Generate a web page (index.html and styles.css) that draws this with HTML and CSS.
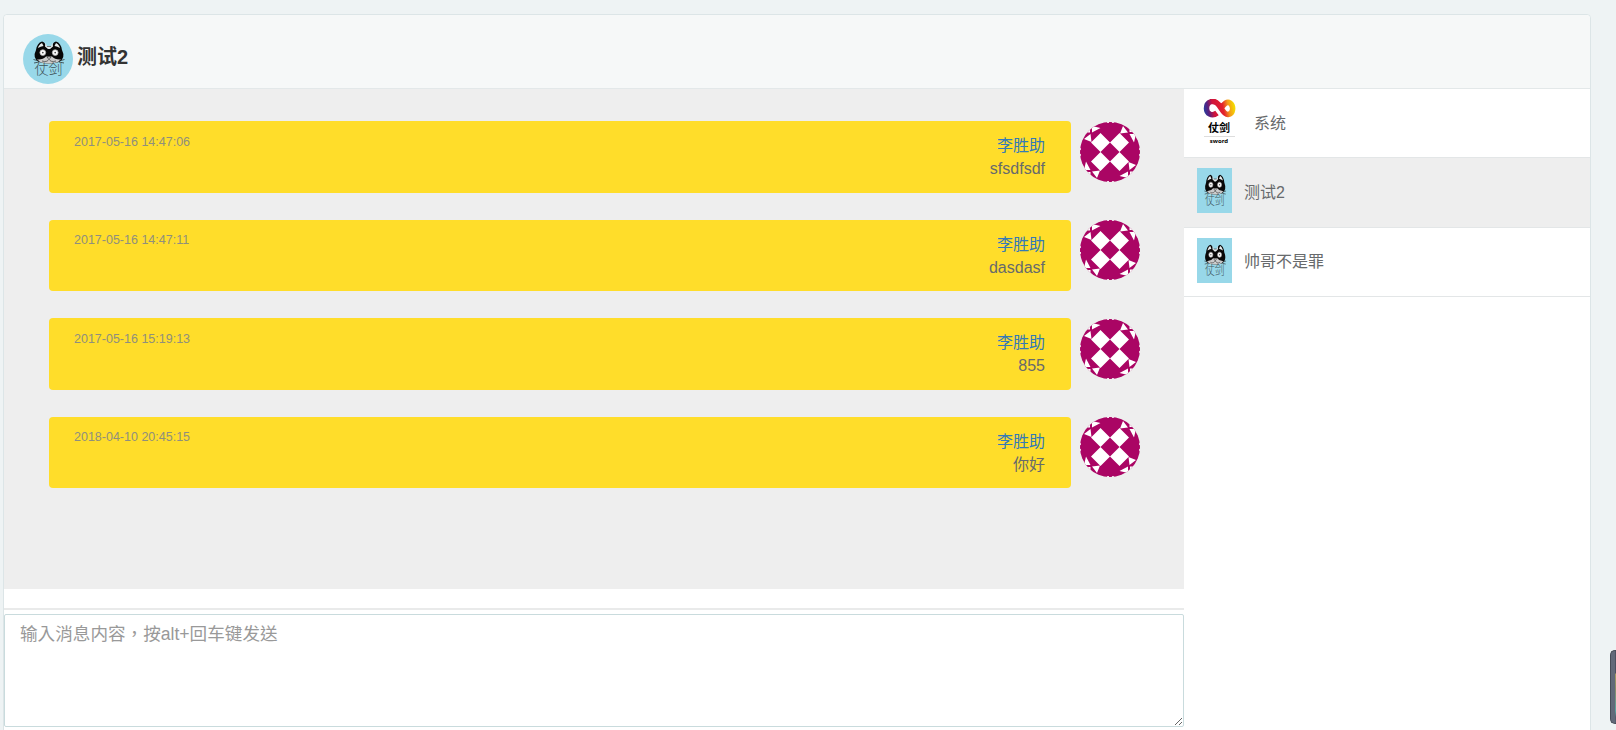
FILE: index.html
```html
<!DOCTYPE html>
<html lang="zh">
<head>
<meta charset="utf-8">
<title>测试2</title>
<link rel="stylesheet" href="styles.css">
</head>
<body>
<svg class="defs" aria-hidden="true">
  <defs>
    <symbol id="cat" viewBox="0 0 50 50" preserveAspectRatio="none">
      <rect width="50" height="50" fill="#98d8e9"/>
      <path d="M13 16Q14 9 19 7.500Q22 8 23 12H29Q30 8 33 7.500Q38 9 39 16Q43 24 36 28Q26 31 16 28Q9 24 13 16Z" fill="#080808"/>
      <path d="M15.500 12.500Q17 9.500 19 9L20.500 12Q17.500 12.500 15 14ZM36.500 12.500Q35 9.500 33 9L31.500 12Q34.500 12.500 37 14Z" fill="#e9eeee"/>
      <path d="M22.500 8.500L24 12.500H28L29.500 8.500L30 12.500L27 15H25L22 12.500Z" fill="#dfe8ea"/>
      <path d="M14 25.500Q20 26 23 22.500H29Q32 26 38 25.500Q35 29.500 26 29.500Q17 29.500 14 25.500Z" fill="#ccc"/>
      <g fill="#fff" stroke="#aaa" stroke-width=".8"><circle cx="19.8" cy="18.6" r="2.9"/><circle cx="32.2" cy="18.6" r="2.9"/></g>
      <g fill="#555"><circle cx="19.8" cy="18.6" r=".9"/><circle cx="32.2" cy="18.6" r=".9"/></g>
      <path d="M24 23H28L26 25.5ZM19 27Q24 28.5 26 25.5Q28 28.5 33 27" fill="#eee" stroke="#333" stroke-width=".7"/>
      <path d="M10.500 25.500L16 27M11 29L16 28M41.500 25.500L36 27M41 29L36 28" stroke="#222" stroke-width=".7"/>
      <text x="25.5" y="40" text-anchor="middle" class="cat-text">仗剑</text>
    </symbol>
    <symbol id="identicon" viewBox="0 0 60 60">
      <rect width="60" height="60" fill="#aa0564"/>
      <path d="M20.5 11L30 20.5L39.5 11L49 20.5L39.5 30L49 39.5L39.5 49L30 39.5L20.5 49L11 39.5L20.5 30L11 20.5Z" fill="#fff"/>
      <path d="M30 20.5L39.5 30L30 39.5L20.5 30Z" fill="#aa0564"/>
      <g id="corner" fill="#fff">
        <path d="M12 4L20.500 6L12 10.500ZM10.500 12L11.500 20L4 17ZM10 6V10.500H6Z"/>
      </g>
      <use href="#corner" transform="rotate(90 30 30)"/>
      <use href="#corner" transform="rotate(180 30 30)"/>
      <use href="#corner" transform="rotate(270 30 30)"/>
      <path d="M27 0H29V1H27ZM32 0H34V1H32ZM27 59H29V60H27ZM32 59H34V60H32ZM0 26H1V28H0ZM0 32H1V34H0ZM59 26H60V28H59ZM59 32H60V34H59Z" fill="#fff"/>
    </symbol>
    <linearGradient id="ribbon" gradientUnits="userSpaceOnUse" x1="4" y1="14" x2="35" y2="8">
      <stop offset="0" stop-color="#2443a0"/><stop offset=".15" stop-color="#572080"/><stop offset=".32" stop-color="#d0143c"/><stop offset=".62" stop-color="#e2202c"/><stop offset=".8" stop-color="#f59a18"/><stop offset="1" stop-color="#f3e000"/>
    </linearGradient>
  </defs>
</svg>

<main class="panel">
  <header class="panel-header">
    <svg class="room-avatar"><use href="#cat"/></svg>
    <h1 class="room-title">测试2</h1>
  </header>
  <div class="panel-body">
    <section class="chat">
      <div class="messages">
        <article class="message">
          <div class="bubble"><time>2017-05-16 14:47:06</time><div class="content"><a class="author">李胜助</a><p>sfsdfsdf</p></div></div>
          <svg class="avatar"><use href="#identicon"/></svg>
        </article>
        <article class="message">
          <div class="bubble"><time>2017-05-16 14:47:11</time><div class="content"><a class="author">李胜助</a><p>dasdasf</p></div></div>
          <svg class="avatar"><use href="#identicon"/></svg>
        </article>
        <article class="message">
          <div class="bubble"><time>2017-05-16 15:19:13</time><div class="content"><a class="author">李胜助</a><p>855</p></div></div>
          <svg class="avatar"><use href="#identicon"/></svg>
        </article>
        <article class="message">
          <div class="bubble"><time>2018-04-10 20:45:15</time><div class="content"><a class="author">李胜助</a><p>你好</p></div></div>
          <svg class="avatar"><use href="#identicon"/></svg>
        </article>
      </div>
      <div class="composer">
        <textarea class="composer-input" lang="zh-TW" placeholder="输入消息内容，按alt+回车键发送"></textarea>
      </div>
    </section>
    <aside class="contacts">
      <div class="contact">
        <svg class="logo" viewBox="0 0 45 45">
          <path d="M17 14C12 18 6.500 14.500 6.500 9.500C6.500 2 14 .5 18 5C22 9 23 15.500 28 15.500C33.500 15 34 7 30 4C27 2 24 5 22 8" fill="none" stroke="url(#ribbon)" stroke-width="5.500"/>
          <text x="19" y="33" text-anchor="middle" class="logo-name">仗剑</text>
          <path d="M4 37.500H35" stroke="#ddd"/>
          <text x="19" y="43.500" text-anchor="middle" class="logo-sub">sword</text>
        </svg>
        <span>系统</span>
      </div>
      <div class="contact active"><svg class="thumb" viewBox="0 0 35 45" preserveAspectRatio="none"><use href="#cat" width="35" height="45"/></svg><span>测试2</span></div>
      <div class="contact"><svg class="thumb" viewBox="0 0 35 45" preserveAspectRatio="none"><use href="#cat" width="35" height="45"/></svg><span>帅哥不是罪</span></div>
    </aside>
  </div>
</main>
<div class="side-widget"></div>
</body>
</html>
```

FILE: styles.css
```css
* { box-sizing: border-box; }
body {
  margin: 0;
  height: 730px;
  overflow: hidden;
  padding: 14px 25px 0 3px;
  background: #eef3f4;
  color: #676a6c;
  font: 16px/23px "Liberation Sans", "Noto Sans CJK SC", sans-serif;
}
.defs { position: absolute; width: 0; height: 0; }
.panel {
  height: 740px;
  border: 1px solid #dce5e7;
  border-radius: 4px;
  background: #fff;
}
.panel-header {
  display: flex;
  height: 74px;
  padding: 19px 19px 0;
  background: #f6f8f8;
  border-bottom: 1px solid #e3e8e9;
  border-radius: 4px 4px 0 0;
}
.room-avatar { width: 50px; height: 50px; border-radius: 50%; }
.room-title { margin: 9px 0 0 4px; color: #333; font-size: 20px; line-height: 28px; font-weight: bold; }
.panel-body { display: flex; }
.chat { width: 1180px; }
.messages { height: 500px; padding: 32px 44px 0 45px; background: #eee; }
.message { display: flex; align-items: flex-start; height: 98.5px; }
.bubble {
  display: flex;
  justify-content: space-between;
  width: 1022px;
  height: 71.5px;
  padding: 13px 26px 0 25px;
  background: #ffdd2a;
  border-radius: 4px;
}
.bubble time { margin-top: .8px; color: #8f8f7d; font-size: 12.5px; line-height: 15px; }
.content { text-align: right; }
.author { display: block; color: #337ab7; }
.content p { margin: 0; }
.avatar { width: 60px; height: 60px; margin: .7px 0 0 9px; border-radius: 50%; }
.composer { margin-top: 19px; padding-top: 4px; border-top: 2px solid #e9eaea; }
.composer-input {
  display: block;
  width: 1180px;
  height: 113px;
  padding: 7px 15px;
  border: 1px solid #c9dbdd;
  border-radius: 2px;
  outline: 0;
  resize: vertical;
  font: 17.6px/25px "Liberation Sans", "Noto Sans CJK TC", sans-serif;
}
.composer-input::placeholder { color: #999; }
.contacts { flex: 1; }
.contact {
  display: flex;
  align-items: center;
  gap: 12px;
  height: 69.3px;
  padding-left: 13px;
  border-bottom: 1px solid #e3e6e7;
}
.contact.active { background: #eee; }
.thumb { width: 35px; height: 45px; margin-bottom: 3px; }
.logo { width: 45px; height: 45px; margin: 0 -3px 4px 3px; }
.cat-text { font: 14px "Noto Sans CJK SC", sans-serif; font-weight: 300; fill: #40545a; }
.logo-name { font: bold 11px "Noto Sans CJK SC", sans-serif; fill: #000; }
.logo-sub { font: bold 6px "Open Sans", sans-serif; fill: #000; }
.side-widget {
  position: absolute;
  right: 0;
  top: 650px;
  width: 6px;
  height: 74px;
  border: 1px solid #474c57;
  border-right: 0;
  border-radius: 5px 0 0 5px;
  background: linear-gradient(90deg, #626979 4px, transparent 4px), linear-gradient(#4c5160 22px, #a49b62 23px, #888d69 38px, #59a5a0 60px, #555d6c 66px);
}
```
